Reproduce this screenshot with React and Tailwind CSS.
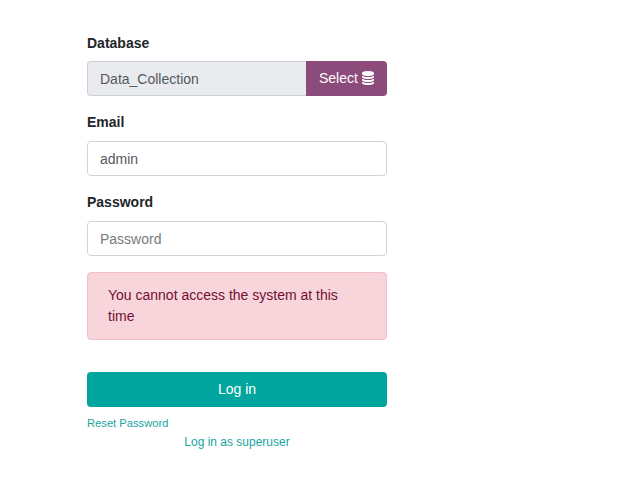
import React from "react";

const label = "block text-[14px] leading-[21px] font-bold text-[#212529]";
const input =
  "block h-[35px] w-full rounded-[4px] border border-[#ced4da] bg-white px-3 text-[14px] leading-[21px] text-[#54595f] outline-none placeholder:text-[#757b81]";

function DatabaseIcon({ className }) {
  return (
    <svg viewBox="0 0 1536 1792" fill="currentColor" className={className} aria-hidden="true">
      <path d="M768 768q237 0 443-43t325-127v170q0 69-103 128t-280 93.5-385 34.5-385-34.5-280-93.5-103-128v-170q119 84 325 127t443 43zm0 768q237 0 443-43t325-127v170q0 69-103 128t-280 93.5-385 34.5-385-34.5-280-93.5-103-128v-170q119 84 325 127t443 43zm0-384q237 0 443-43t325-127v170q0 69-103 128t-280 93.5-385 34.5-385-34.5-280-93.5-103-128v-170q119 84 325 127t443 43zm0-1152q208 0 385 34.5t280 93.5 103 128v128q0 69-103 128t-280 93.5-385 34.5-385-34.5-280-93.5-103-128v-128q0-69 103-128t280-93.5 385-34.5z" />
    </svg>
  );
}

export default function App() {
  return (
    <main className="h-[485px] w-full overflow-hidden bg-white pt-[33px] pl-[87px] font-['Liberation_Sans',Arial,sans-serif]">
      <form className="flex w-[300px] flex-col" onSubmit={(e) => e.preventDefault()}>
        <label htmlFor="db" className={label}>Database</label>
        <div className="mt-[7px] flex h-[35px]">
          <input
            id="db"
            readOnly
            defaultValue="Data_Collection"
            className="min-w-0 flex-1 rounded-l-[4px] border border-r-0 border-[#ced1d8] bg-[#e9ebee] px-3 pt-[2px] text-[14px] leading-[21px] text-[#54595f] outline-none"
          />
          <button type="button" className="flex w-[81px] items-center gap-1 rounded-r-[4px] bg-[#8b4b7b] pl-[13px] text-[14px] leading-[21px] text-white">
            Select <DatabaseIcon className="mb-px h-[14px] w-3" />
          </button>
        </div>
        <label htmlFor="email" className={`${label} mt-4`}>Email</label>
        <div className="mt-2">
          <input id="email" defaultValue="admin" className={input} />
        </div>
        <label htmlFor="password" className={`${label} mt-4`}>Password</label>
        <div className="mt-2">
          <input id="password" type="password" placeholder="Password" className={input} />
        </div>
        <p className="mt-4 h-[68px] rounded-[4px] border border-[#f1c0cb] bg-[#f8d4db] px-5 py-3 text-[14px] leading-[21px] text-[#721033]">
          You cannot access the system at this time
        </p>
        <button className="mt-8 h-[35px] rounded-[4px] bg-[#00a59d] text-[14px] leading-[21px] text-white">Log in</button>
        <a href="#reset" className="mt-2 self-start text-[11.2px] leading-4 text-[#17a59f]">Reset Password</a>
        <a href="#superuser" className="mt-[2px] self-center text-[12px] leading-[18px] text-[#17a59f]">Log in as superuser</a>
      </form>
    </main>
  );
}
